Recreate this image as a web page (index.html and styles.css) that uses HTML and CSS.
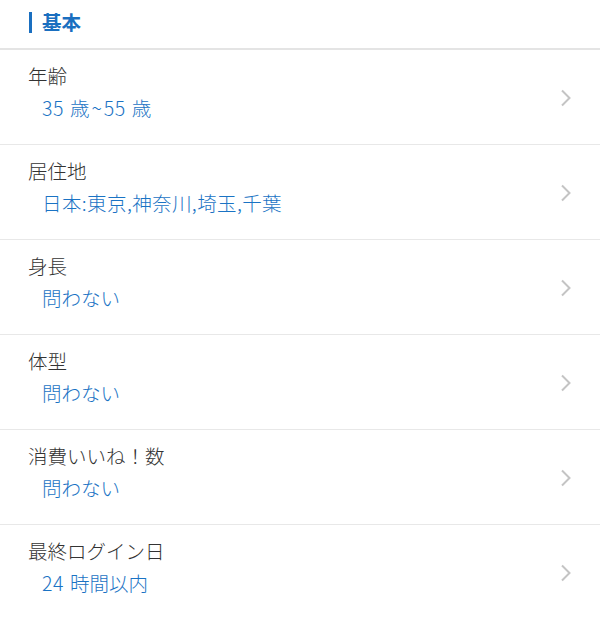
FILE: index.html
```html
<!DOCTYPE html>
<html lang="ja">
<head>
<meta charset="utf-8">
<link rel="stylesheet" href="styles.css">
</head>
<body>
<div class="page">
  <div class="section-head"><span class="bar"></span><span class="title">基本</span></div>
  <ul class="list">
    <li class="row"><div class="text"><div class="label">年齢</div><div class="value"><span class="num">35</span>歳<span class="tilde">~</span><span class="num">55</span>歳</div></div><svg class="chev" viewBox="0 0 12 18" width="12" height="18"><path d="M2 1.5 L9.5 9 L2 16.5" fill="none" stroke="#c4c4c4" stroke-width="2"/></svg></li>
    <li class="row"><div class="text"><div class="label">居住地</div><div class="value spaced">日本:東京,神奈川,埼玉,千葉</div></div><svg class="chev" viewBox="0 0 12 18" width="12" height="18"><path d="M2 1.5 L9.5 9 L2 16.5" fill="none" stroke="#c4c4c4" stroke-width="2"/></svg></li>
    <li class="row"><div class="text"><div class="label">身長</div><div class="value">問わない</div></div><svg class="chev" viewBox="0 0 12 18" width="12" height="18"><path d="M2 1.5 L9.5 9 L2 16.5" fill="none" stroke="#c4c4c4" stroke-width="2"/></svg></li>
    <li class="row"><div class="text"><div class="label">体型</div><div class="value">問わない</div></div><svg class="chev" viewBox="0 0 12 18" width="12" height="18"><path d="M2 1.5 L9.5 9 L2 16.5" fill="none" stroke="#c4c4c4" stroke-width="2"/></svg></li>
    <li class="row"><div class="text"><div class="label">消費いいね！数</div><div class="value">問わない</div></div><svg class="chev" viewBox="0 0 12 18" width="12" height="18"><path d="M2 1.5 L9.5 9 L2 16.5" fill="none" stroke="#c4c4c4" stroke-width="2"/></svg></li>
    <li class="row last"><div class="text"><div class="label">最終ログイン日</div><div class="value"><span class="num">24</span>時間以内</div></div><svg class="chev" viewBox="0 0 12 18" width="12" height="18"><path d="M2 1.5 L9.5 9 L2 16.5" fill="none" stroke="#c4c4c4" stroke-width="2"/></svg></li>
  </ul>
</div>
</body>
</html>
```
FILE: styles.css
```css
* { box-sizing: border-box; }
html, body { margin: 0; padding: 0; background: #fff; }
body { font-family: "Noto Sans CJK JP", "Noto Sans", sans-serif; }
.page { width: 600px; }
.section-head {
  height: 50px;
  display: flex;
  align-items: center;
  padding: 0 0 4px 29px;
  border-bottom: 2px solid #e4e4e4;
}
.bar { width: 3px; height: 21px; background: #1a6fc0; margin-right: 10px; }
.title { font-size: 19.5px; font-weight: 700; color: #1a6fc0; line-height: 24px; }
.list { list-style: none; margin: 0; padding: 0; }
.row {
  display: flex;
  align-items: flex-start;
  justify-content: space-between;
  height: 95px;
  padding: 14px 28px 0 28px;
  border-bottom: 1px solid #e8e8e8;
}
.row.last { border-bottom: none; }
.text { display: flex; flex-direction: column; }
.label { font-size: 19.5px; line-height: 24px; color: #333; font-weight: 300; }
.value { font-size: 19.5px; line-height: 24px; color: #1a73c4; margin-top: 8px; padding-left: 14px; font-weight: 300; }
.value.spaced { letter-spacing: 0.4px; }
.num { margin-right: 6px; letter-spacing: 0.5px; }
.tilde { margin: 0 2px; }
.chev { flex: none; align-self: center; margin-top: -13px; }
```
